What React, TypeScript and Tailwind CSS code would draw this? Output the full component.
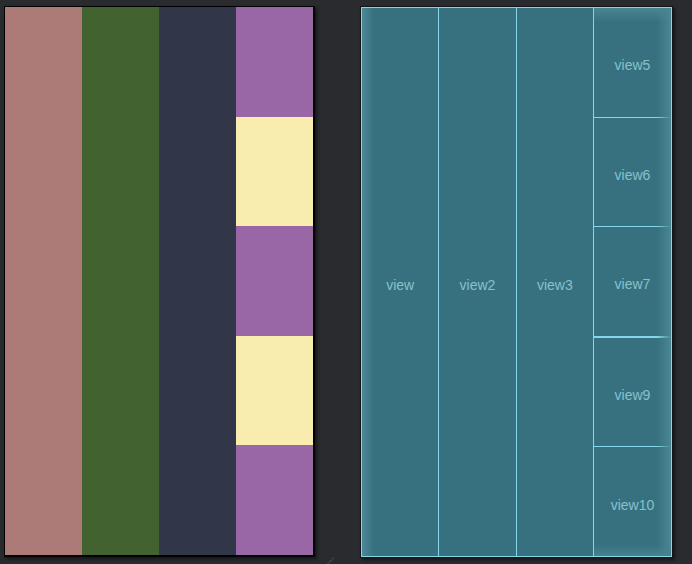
import React from "react";

const font = { fontFamily: '"Liberation Sans", Arial, sans-serif' };

function Cell({ label, className = "" }: { label: string; className?: string }) {
  return (
    <div
      className={`flex flex-1 items-center justify-center pt-[7px] text-[14px] font-light text-[#86c1cd] ${className}`}
    >
      {label}
    </div>
  );
}

export default function App() {
  return (
    <div className="relative h-[564px] w-[692px] bg-[#2a2b2f]" style={font}>
      <div className="flex pt-[6px]">
        {/* Left panel */}
        <div className="ml-[4px] flex h-[551px] w-[311px] border-t border-l border-b-2 border-r-2 border-black shadow-[2px_2px_3px_rgba(0,0,0,0.5)]">
          <div className="w-[77px] bg-[#ad7b77]" />
          <div className="w-[77px] bg-[#426330]" />
          <div className="w-[77px] bg-[#323649]" />
          <div className="flex flex-1 flex-col">
            <div className="h-[110px] bg-[#9966a6]" />
            <div className="h-[109px] bg-[#f8edae]" />
            <div className="h-[110px] bg-[#9966a6]" />
            <div className="h-[109px] bg-[#f8edae]" />
            <div className="flex-1 bg-[#9966a6]" />
          </div>
        </div>

        {/* Right panel */}
        <div className="ml-[45px] h-[552px] w-[313px] border border-[#141518] shadow-[2px_2px_3px_rgba(0,0,0,0.5)]">
          <div className="relative flex h-full w-full border border-[#84d6e8] bg-[#37717f]">
            <div className="pointer-events-none absolute left-0 top-0 h-full w-[12px] bg-gradient-to-r from-[#4c8897] to-transparent" />
            <Cell label="view" className="border-r border-[#84d6e8]" />
            <Cell label="view2" className="border-r border-[#84d6e8]" />
            <Cell label="view3" className="border-r border-[#84d6e8]" />
            <div className="relative flex w-[77px] flex-col">
              <Cell label="view5" className="border-b border-[#84d6e8]" />
              <Cell label="view6" className="border-b border-[#84d6e8]" />
              <Cell label="view7" className="border-b-2 border-[#84d6e8]" />
              <Cell label="view9" className="border-b border-[#84d6e8]" />
              <Cell label="view10" />
              <div className="pointer-events-none absolute right-0 top-0 h-full w-[14px] bg-gradient-to-l from-[#4b8694] to-transparent" />
              <div className="pointer-events-none absolute left-0 top-0 h-[14px] w-full bg-gradient-to-b from-[#4a8593] to-transparent" />
              <div className="pointer-events-none absolute bottom-0 left-0 h-[12px] w-full bg-gradient-to-t from-[#47818f] to-transparent" />
            </div>
          </div>
        </div>
      </div>

      {/* resize grip */}
      <svg className="absolute left-[327px] top-[557px]" width="8" height="7" viewBox="0 0 8 7">
        <line x1="1" y1="6.5" x2="7" y2="0.5" stroke="#7d7f85" strokeWidth="1" strokeDasharray="1 1" />
      </svg>
    </div>
  );
}
